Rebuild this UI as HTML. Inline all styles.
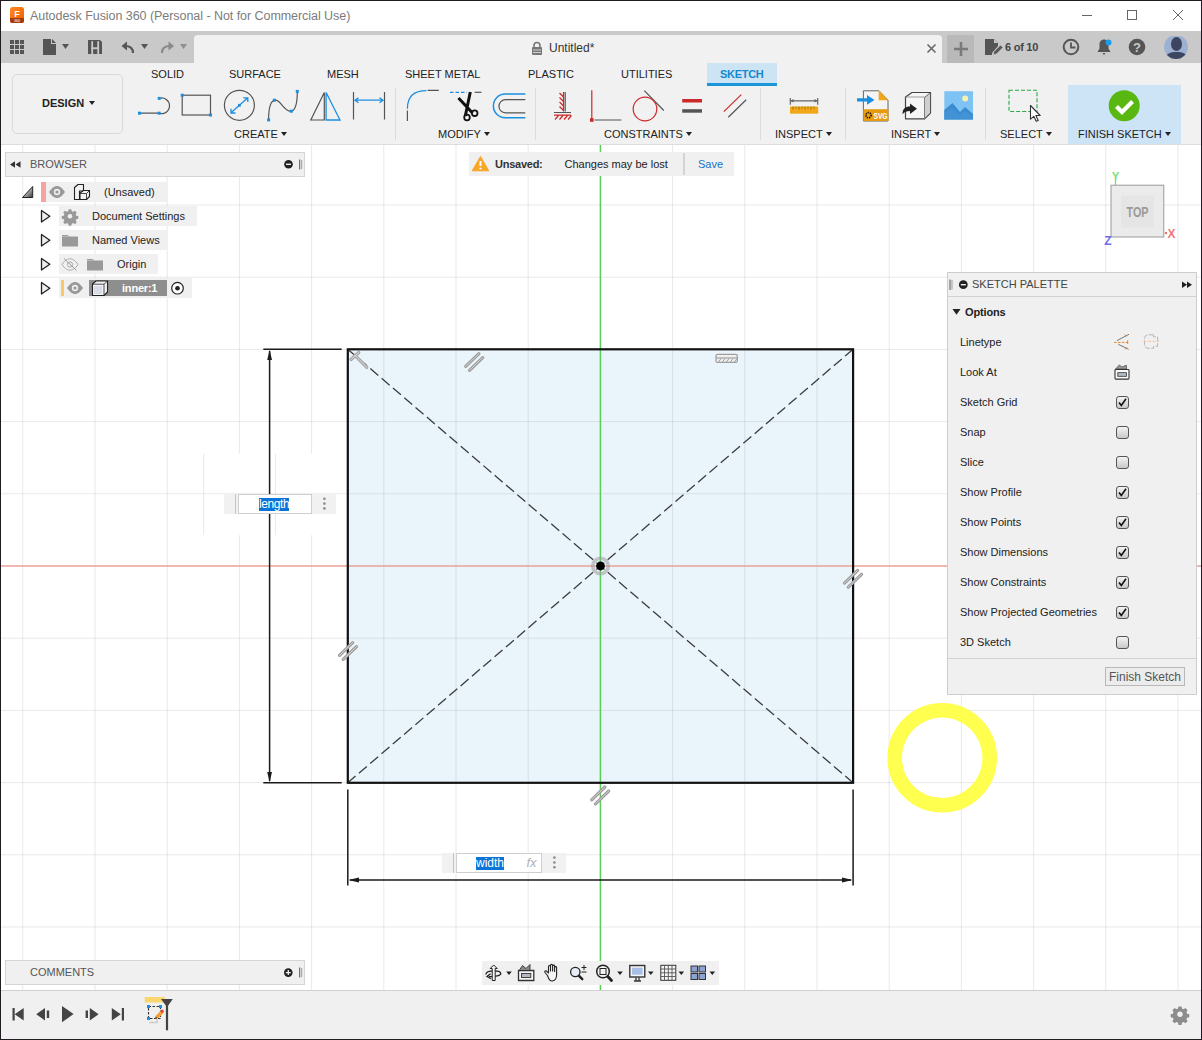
<!DOCTYPE html>
<html><head><meta charset="utf-8"><title>Autodesk Fusion 360</title>
<style>
*{box-sizing:border-box;margin:0;padding:0}
html,body{width:1202px;height:1040px;overflow:hidden;background:#fff}
body{font-family:"Liberation Sans",sans-serif;font-size:11px;color:#333;position:relative}
.abs{position:absolute}
.t{position:absolute;white-space:nowrap;line-height:14px}
#frame{position:absolute;left:0;top:0;width:1202px;height:1040px;border:1px solid #221a22;pointer-events:none;z-index:50}
#title{left:1px;top:1px;width:1200px;height:30px;background:#fff}
#qat{left:1px;top:31px;width:1200px;height:32px;background:#c9c9c9}
#tabarea{left:194px;top:35px;width:748px;height:28px;background:#f1f1f1;border-radius:4px 4px 0 0}
#ribbon{left:1px;top:63px;width:1200px;height:82px;background:#f1f1f1;border-bottom:1px solid #ddd}
#canvas{left:1px;top:145px;width:1200px;height:845px;background:#fff}
#timeline{left:1px;top:990px;width:1200px;height:49px;background:#f0f0f0;border-top:1px solid #d0d0d0}
.rt{position:absolute;top:67px;line-height:14px;font-size:11px;color:#222;white-space:nowrap}
.rl{position:absolute;top:127px;line-height:14px;font-size:11px;color:#222;white-space:nowrap}
.arr{display:inline-block;width:0;height:0;border-left:3px solid transparent;border-right:3px solid transparent;border-top:4px solid #222;vertical-align:middle;margin-left:3px;position:relative;top:-1px}
.sep{position:absolute;top:88px;width:1px;height:52px;background:#dcdcdc}
.panelhdr{position:absolute;background:#f0f0f0;border:1px solid #d4d4d4}
.tree{position:absolute;background:#f0f0f0;height:20px}
.pl{position:absolute;left:960px;line-height:14px;font-size:11px;color:#222;white-space:nowrap}
.cb{position:absolute;left:1116px;width:12.500px;height:12.500px;border:1px solid #555;border-radius:3px;background:linear-gradient(#f4f4f4,#c8c8c8)}
</style></head><body>
<div id="title" class="abs"></div>
<div id="qat" class="abs"></div>
<div id="tabarea" class="abs"></div>
<div id="ribbon" class="abs"></div>
<div id="canvas" class="abs"></div>
<div id="timeline" class="abs"></div>
<!-- title bar -->
<svg class="abs" style="left:9px;top:6px" width="16" height="18" viewBox="0 0 16 18">
<defs><linearGradient id="fg" x1="0" y1="0" x2="1" y2="1"><stop offset="0" stop-color="#ff8a1f"/><stop offset="1" stop-color="#f05a00"/></linearGradient></defs>
<rect x="1" y="1" width="14" height="16" rx="2.5" fill="url(#fg)"/>
<path d="M1 12h14v2.5a2.500 2.500 0 0 1-2.500 2.500h-9a2.500 2.500 0 0 1-2.500-2.500z" fill="#a83a08"/>
<text x="8" y="10.500" font-size="9" font-weight="700" fill="#fff" text-anchor="middle" font-family="Liberation Sans, sans-serif">F</text>
<text x="8" y="16" font-size="3.500" font-weight="700" fill="#f6d9c8" text-anchor="middle" font-family="Liberation Sans, sans-serif">360</text>
</svg>
<div class="t" style="left:30px;top:8px;font-size:12.500px;line-height:16px;color:#7c7c7c;letter-spacing:-0.050px">Autodesk Fusion 360 (Personal - Not for Commercial Use)</div>
<svg class="abs" style="left:1075px;top:5px" width="120" height="22" viewBox="0 0 120 22" fill="none" stroke="#666" stroke-width="1">
<path d="M7 10.500h10"/><rect x="52.500" y="5.500" width="9" height="9"/><path d="M98 5l10 10M108 5l-10 10"/>
</svg>
<!-- quick access -->
<svg class="abs" style="left:1px;top:31px" width="200" height="32" viewBox="1 31 200 32">
<g fill="#555">
<rect x="10" y="40" width="4" height="4"/><rect x="15" y="40" width="4" height="4"/><rect x="20" y="40" width="4" height="4"/>
<rect x="10" y="45" width="4" height="4"/><rect x="15" y="45" width="4" height="4"/><rect x="20" y="45" width="4" height="4"/>
<rect x="10" y="50" width="4" height="4"/><rect x="15" y="50" width="4" height="4"/><rect x="20" y="50" width="4" height="4"/>
<path d="M43 39h8v5h5v11h-13z"/><path d="M52 39l4 4h-4z"/>
<path d="M62 44h7l-3.500 5z"/>
<path d="M88 40h12l2 2v12h-14z"/>
<path d="M141 44h7l-3.500 5z"/>
</g>
<g fill="#c9c9c9"><rect x="91.300" y="41.200" width="1.800" height="12.800"/><rect x="97.300" y="41.200" width="1.800" height="12.800"/><rect x="91.300" y="47.300" width="7.800" height="1.900"/></g>
<path d="M133 53c0-4.500-2.500-7-8-7" fill="none" stroke="#555" stroke-width="2.200"/><path d="M121.500 46l5.500-4.500v9z" fill="#555"/>
<path d="M162 53c0-4.500 2.500-7 8-7" fill="none" stroke="#8a8a8a" stroke-width="2.200"/><path d="M174 46l-5.500-4.500v9z" fill="#8a8a8a"/>
<path d="M180 44h7l-3.500 5z" fill="#8f8f8f"/>
</svg>
<!-- doc tab -->
<svg class="abs" style="left:530px;top:41px" width="14" height="16" viewBox="0 0 14 16"><rect x="2" y="6" width="10" height="8" rx="1" fill="#777"/><path d="M4 6.500v-2a3 3 0 0 1 6 0v2" fill="none" stroke="#777" stroke-width="1.600"/><path d="M3 9h8M3 11.500h8" stroke="#e8e8e8" stroke-width="0.800"/></svg>
<div class="t" style="left:549px;top:41px;font-size:12px;line-height:15px;color:#333">Untitled*</div>
<svg class="abs" style="left:926px;top:43px" width="11" height="11" viewBox="0 0 11 11"><path d="M1.500 1.500l8 8M9.500 1.500l-8 8" stroke="#666" stroke-width="1.600"/></svg>
<div class="abs" style="left:947px;top:35px;width:27px;height:28px;background:#b9b9b9"></div>
<svg class="abs" style="left:953px;top:41px" width="16" height="16" viewBox="0 0 16 16"><path d="M8 1v14M1 8h14" stroke="#7a7a7a" stroke-width="2.600"/></svg>
<svg class="abs" style="left:984px;top:38px" width="20" height="19" viewBox="0 0 20 19"><path d="M1 1h9l4 4v3l-6 7v2h-7z" fill="#555"/><path d="M10 1v4h4" fill="#c9c9c9"/><path d="M9 17l1-3.500 6.500-6.500 2.500 2.500-6.500 6.500z" fill="#555" stroke="#c9c9c9" stroke-width="0.800"/></svg>
<div class="t" style="left:1005px;top:40px;font-size:11px;font-weight:700;line-height:14px;color:#444;letter-spacing:-0.250px">6 of 10</div>
<svg class="abs" style="left:1060px;top:36px" width="140" height="24" viewBox="1060 36 140 24">
<circle cx="1071" cy="47" r="7.300" fill="none" stroke="#555" stroke-width="2"/><path d="M1071 42.500v5h4.500" fill="none" stroke="#555" stroke-width="1.800"/>
<path d="M1104 39.500c-3 0-4.500 2.300-4.500 5v4l-2 3.500h13l-2-3.500v-4c0-2.700-1.500-5-4.500-5z" fill="#555"/><path d="M1102.500 53h3l-1.500 2z" fill="#555"/><circle cx="1108.500" cy="42.500" r="3" fill="#1c9be6"/>
<circle cx="1137" cy="47" r="8.300" fill="#555"/>
<text x="1137" y="51.500" font-size="13" font-weight="700" fill="#c9c9c9" text-anchor="middle" font-family="Liberation Sans, sans-serif">?</text>
<circle cx="1176" cy="47" r="12" fill="#9db1d2"/>
<clipPath id="avc"><circle cx="1176" cy="47" r="12"/></clipPath>
<g clip-path="url(#avc)" fill="#3c4660"><ellipse cx="1176.500" cy="44" rx="5.500" ry="7"/><path d="M1165 60c0-6 5-8 11.500-8s11.500 2 11.500 8z"/></g>
</svg>
<!-- ribbon -->
<div class="abs" style="left:707px;top:63px;width:70px;height:23px;background:#cde4f4;border-bottom:3px solid #1b94d8"></div>
<div class="abs" style="left:1068px;top:85px;width:113px;height:59px;background:#cce4f6"></div>
<div class="abs" style="left:12px;top:74px;width:111px;height:60px;border:1px solid #d9d9d9;border-radius:5px"></div>
<div class="t" style="left:42px;top:96px;font-weight:700;color:#222">DESIGN<span class="arr" style="margin-left:5px"></span></div>
<div class="rt" style="left:151px">SOLID</div>
<div class="rt" style="left:229px">SURFACE</div>
<div class="rt" style="left:327px">MESH</div>
<div class="rt" style="left:405px">SHEET METAL</div>
<div class="rt" style="left:528px">PLASTIC</div>
<div class="rt" style="left:621px">UTILITIES</div>
<div class="rt" style="left:720px;color:#1589d0;font-weight:700;letter-spacing:-0.300px">SKETCH</div>
<div class="rl" style="left:234px">CREATE<span class="arr"></span></div>
<div class="rl" style="left:438px">MODIFY<span class="arr"></span></div>
<div class="rl" style="left:604px">CONSTRAINTS<span class="arr"></span></div>
<div class="rl" style="left:775px">INSPECT<span class="arr"></span></div>
<div class="rl" style="left:891px">INSERT<span class="arr"></span></div>
<div class="rl" style="left:1000px">SELECT<span class="arr"></span></div>
<div class="rl" style="left:1078px">FINISH SKETCH<span class="arr"></span></div>
<div class="sep" style="left:395px"></div><div class="sep" style="left:535px"></div><div class="sep" style="left:760px"></div><div class="sep" style="left:845px"></div><div class="sep" style="left:985px"></div>
<svg class="abs" style="left:130px;top:84px" width="1060" height="42" viewBox="130 84 1060 42" fill="none" stroke-linecap="butt">
<g stroke="#555" stroke-width="1.200">
<!-- line -->
<path d="M139.500 113.200H159.200A7.810 7.810 0 1 0 159.200 98.400"/>
<!-- rect -->
<rect x="182.200" y="95.200" width="28.300" height="19.800"/>
<!-- circle -->
<circle cx="239.400" cy="105.300" r="15"/>
<!-- spline -->
<path d="M268.600 119.900C268.600 108 270.500 100.800 275 100.200C281 99.500 284 112.500 291.300 111.200C296 110 297.300 100 297.300 91.400"/>
<!-- mirror -->
<path d="M310.800 120H324.300V92.500Z"/>
<!-- dim -->
<path d="M353.500 92V119.500M384.500 92V119.500"/>
<!-- fillet -->
<path d="M407.400 110.500V121M427.600 90.300H438.800"/>
<!-- trim -->
<path d="M474.700 92.300H481.500"/>
<!-- offset inner -->
<path d="M525.300 99.700H505.500A6.550 6.550 0 0 0 505.500 112.800H525.300"/>
<!-- constraints -->
<path d="M565.200 92.100V111.400M554 112.500H571M594.500 120H621.400M644.300 90.700L663.800 110.500M728.300 117.200L746.200 99.700"/>
<path d="M790.300 100.800H817.700M790.300 98V104.700M817.700 98V104.700" stroke="#666"/>
</g>
<g stroke="#1c8ee0" stroke-width="1.300">
<path d="M231.500 112.300L247.300 98.300M231 108.800V113H235.500M243.300 97.800H247.800V102"/>
<path d="M326.100 92.500V120H340Z"/>
<path d="M355 100.200H383M358.500 97.700L355 100.200L358.500 102.700M379.500 97.700L383 100.200L379.500 102.700"/>
<path d="M407.400 108.700C407.400 97 414 90.700 426.400 90.700"/>
<path d="M450 92.300H467" stroke-dasharray="3.500 2"/>
<path d="M525.300 94.100H505.200A11.800 11.800 0 0 0 505.200 117.700H525.300" stroke-width="1.500"/>
</g>
<g fill="#1c8ee0">
<rect x="138" y="111.700" width="3" height="3"/><rect x="157.700" y="111.700" width="3" height="3"/><rect x="157.700" y="96.900" width="3" height="3"/>
<rect x="180.700" y="93.700" width="3" height="3"/><rect x="209" y="113.500" width="3" height="3"/>
<rect x="238" y="103.900" width="2.800" height="2.800"/>
<rect x="267.100" y="118.400" width="3" height="3"/><rect x="272.900" y="98.700" width="3" height="3"/><rect x="289.800" y="109.700" width="3" height="3"/><rect x="295.800" y="89.900" width="3" height="3"/>
</g>
<!-- scissors -->
<g stroke="#111" fill="none">
<path d="M458.500 98L472.500 113M470.300 92L465.300 116" stroke-width="3"/>
<circle cx="467" cy="117.500" r="2.800" stroke-width="1.800"/><circle cx="474.700" cy="113.200" r="2.800" stroke-width="1.800"/>
</g>
<!-- red constraints -->
<g stroke="#cc2a2a" stroke-width="1.200">
<path d="M563.500 92.100V111.400M563.500 97L559.500 93M563.500 101.500L559.500 97.500M563.500 106L559.500 102M563.500 110.500L559.500 106.500"/>
<path d="M554 115.200H571M558.500 115.500L555 119.500M563 115.500L559.500 119.500M567.500 115.500L564 119.500M571.500 115.500L568 119.500"/>
<path d="M591.800 90.300V120"/>
<circle cx="645" cy="109" r="11.800"/>
<path d="M723.800 111.600L741.300 94.600"/>
</g>
<rect x="590" y="118.200" width="3.600" height="3.600" fill="#cc2a2a"/>
<rect x="682.200" y="99" width="19.800" height="3.500" fill="#cc2a2a"/>
<rect x="682.200" y="109.200" width="19.800" height="3.500" fill="#555"/>
<!-- ruler -->
<path d="M793.500 99L790.300 100.800L793.500 102.600ZM814.500 99L817.700 100.800L814.500 102.600Z" fill="#666"/>
<rect x="790" y="106.500" width="28.200" height="7.200" fill="#f0a81a"/>
<path d="M793 106.500v3M796 106.500v2M799 106.500v3M802 106.500v2M805 106.500v3M808 106.500v2M811 106.500v3M814 106.500v2" stroke="#8a5a00" stroke-width="0.800"/>
<!-- insert svg -->
<path d="M863.400 100V90.800H879L888 100V121H863.400Z" fill="#f4f4f4" stroke="#666" stroke-width="1"/>
<path d="M878.700 90.300L888.400 100.200H878.700Z" fill="#f0a81a"/>
<rect x="863.400" y="109.200" width="25" height="11.800" fill="#e79c10"/>
<circle cx="868.500" cy="115.200" r="2.600" fill="none" stroke="#111" stroke-width="1.500" stroke-dasharray="1.300 0.900"/>
<text x="880.500" y="119" font-size="8.500" font-weight="700" fill="#fff" text-anchor="middle" font-family="Liberation Sans, sans-serif" textLength="14" lengthAdjust="spacingAndGlyphs">SVG</text>
<path d="M857 98.200H867V95L874.500 99.900L867 104.800V101.600H857Z" fill="#1c8ee0"/>
<!-- derive -->
<path d="M905.500 97L912 92.500H930.500V113L924.500 118.800H905.500Z" fill="#f6f6f6" stroke="#444" stroke-width="1.200" stroke-linejoin="round"/>
<path d="M924.500 97.500L930.500 92.500V113L924.500 118.800Z" fill="#cfcfcf" stroke="#444" stroke-width="0.800"/>
<path d="M905.500 97H924.500V118.800" stroke="#888" stroke-width="0.800"/>
<path d="M902.500 114.300C902.500 109 905 106.500 910 106.500V103.500L917 108.800L910 114V111C906.500 111 904.500 112 902.500 114.300Z" fill="#222"/>
<!-- image -->
<rect x="944.300" y="91.200" width="28.700" height="28.300" fill="#7ec3f3"/>
<path d="M944.300 119.500V110L952.500 103L960 112L965 107L973 114V119.500Z" fill="#3a8bd0"/>
<path d="M944.300 119.500V113L952 108L959 115L965 111L973 117V119.500Z" fill="#4a98d8" opacity="0.600"/>
<circle cx="965.200" cy="98.600" r="3" fill="#f6f1b0"/>
<!-- select -->
<rect x="1009" y="90.300" width="28" height="21.200" stroke="#28a848" stroke-width="1.100" stroke-dasharray="4 2"/>
<path d="M1030.500 105.500V119.200L1033.800 116.300L1036.200 121.300L1038.200 120.400L1035.900 115.500H1040.200Z" fill="#fff" stroke="#333" stroke-width="1.100" stroke-linejoin="round"/>
<!-- finish -->
<circle cx="1124.200" cy="105.800" r="15.500" fill="#58b711"/>
<path d="M1116.500 106.500L1122 112L1132.500 101.500" stroke="#fff" stroke-width="4.200" fill="none"/>
</svg>
<!--CANVAS-START--><svg class="abs" style="left:1px;top:145px" width="1200" height="845" viewBox="1 145 1200 845" fill="none">
<rect x="347.700" y="349.200" width="505.400" height="433.600" fill="#eaf5fb"/>
<path d="M22.8 145V990M95.0 145V990M167.2 145V990M239.4 145V990M311.6 145V990M383.8 145V990M456.0 145V990M528.2 145V990M672.6 145V990M744.8 145V990M817.0 145V990M889.2 145V990M961.4 145V990M1033.6 145V990M1105.8 145V990M1178.0 145V990M1 205.0H1201M1 277.2H1201M1 349.4H1201M1 421.6H1201M1 493.8H1201M1 638.2H1201M1 710.4H1201M1 782.6H1201M1 854.8H1201M1 927.0H1201" stroke="#000" stroke-opacity="0.090" stroke-width="1"/>
<path d="M1 566H1201" stroke="#eaa096" stroke-width="1.500"/>
<path d="M600.400 145V990" stroke="#58d058" stroke-width="1.500"/>
<rect x="202" y="453.700" width="144" height="81.500" fill="#fff"/>
<path d="M203.700 453.700V535.200M275.400 453.700V535.200M202 493.800H346" stroke="#000" stroke-opacity="0.090" stroke-width="1"/>
<path d="M347.700 349.200L853.100 782.800M853.100 349.200L347.700 782.800" stroke="#3c3c3c" stroke-width="1.300" stroke-dasharray="10.500 4.400"/>
<rect x="347.800" y="349.300" width="505.300" height="433.500" stroke="#111" stroke-width="2.200"/>
<circle cx="600.500" cy="566" r="7.800" stroke="#9a9a9a" stroke-opacity="0.550" stroke-width="3.600"/>
<circle cx="600.500" cy="566" r="4.400" fill="#000"/>
<path d="M465.7 366.4L478.9 353.7M469.5 370.3L482.7 357.6" stroke="#9c9c9c" stroke-width="3.200" stroke-linecap="round"/><path d="M465.7 366.4L478.9 353.7M469.5 370.3L482.7 357.6" stroke="#dcdcdc" stroke-width="0.900" stroke-linecap="round"/>
<path d="M844.5 583.1L857.7 570.4M848.3 587.1L861.5 574.3" stroke="#9c9c9c" stroke-width="3.200" stroke-linecap="round"/><path d="M844.5 583.1L857.7 570.4M848.3 587.1L861.5 574.3" stroke="#dcdcdc" stroke-width="0.900" stroke-linecap="round"/>
<path d="M339.5 655.4L352.7 642.6M343.3 659.4L356.5 646.6" stroke="#9c9c9c" stroke-width="3.200" stroke-linecap="round"/><path d="M339.5 655.4L352.7 642.6M343.3 659.4L356.5 646.6" stroke="#dcdcdc" stroke-width="0.900" stroke-linecap="round"/>
<path d="M591.7 799.8L604.9 787.0M595.5 803.8L608.7 791.0" stroke="#9c9c9c" stroke-width="3.200" stroke-linecap="round"/><path d="M591.7 799.8L604.9 787.0M595.5 803.8L608.7 791.0" stroke="#dcdcdc" stroke-width="0.900" stroke-linecap="round"/>
<path d="M351 359.500L358.800 352.500M355 355.300L366.800 367.400" stroke="#a4a4a4" stroke-width="3.200" stroke-linecap="round"/><path d="M351 359.500L358.800 352.500M355 355.300L366.800 367.400" stroke="#e4e4e4" stroke-width="1" stroke-linecap="round"/>
<rect x="716" y="354.400" width="21.300" height="8" rx="1.500" stroke="#a0a0a0" stroke-width="1.300" fill="#f0f0f0"/>
<path d="M716 358H737.300" stroke="#a0a0a0" stroke-width="1.200"/>
<path d="M718.500 362l2.500-3.500M722.500 362l2.500-3.500M726.500 362l2.500-3.500M730.500 362l2.500-3.500M734.500 362l2.500-3.500" stroke="#a0a0a0" stroke-width="1"/>
<g stroke="#1a1a1a" stroke-width="1.500">
<path d="M263.300 349.200H341.700M263.300 782.800H341.700M269.600 351V494M269.600 514V781"/>
<path d="M347.800 789.500V885.500M853.100 789.500V885.500M350 880H851"/>
</g>
<g fill="#1a1a1a">
<path d="M269.600 349.800L267.200 360H272Z"/><path d="M269.600 782.200L267.200 772H272Z"/>
<path d="M348.400 880L359 877.600V882.400Z"/><path d="M852.500 880L842 877.600V882.400Z"/>
</g>
<circle cx="942.200" cy="757.800" r="47.500" stroke="#ffff40" stroke-opacity="0.920" stroke-width="14.600"/>
</svg>
<!--CANVAS-END-->
<!-- browser header -->
<div class="panelhdr" style="left:5px;top:152px;width:300px;height:25px"></div>
<svg class="abs" style="left:9px;top:160px" width="14" height="9" viewBox="0 0 14 9"><path d="M1 4.500L6 1.200V7.800ZM6.500 4.500L11.500 1.200V7.800Z" fill="#333"/></svg>
<div class="t" style="left:30px;top:157px;color:#555">BROWSER</div>
<svg class="abs" style="left:283px;top:158px" width="22" height="13" viewBox="0 0 22 13"><circle cx="5.500" cy="6.300" r="4.300" fill="#222"/><path d="M3 6.300H8" stroke="#f0f0f0" stroke-width="1.400"/><path d="M16.700 1.500V11.500" stroke="#555" stroke-width="1"/><path d="M18.700 2V11" stroke="#999" stroke-width="1"/></svg>
<!-- tree rows -->
<div class="tree" style="left:41px;top:182px;width:126px"></div>
<div class="tree" style="left:59px;top:206px;width:138px"></div>
<div class="tree" style="left:59px;top:230px;width:109px"></div>
<div class="tree" style="left:59px;top:254px;width:99px"></div>
<div class="tree" style="left:59px;top:278px;width:133px"></div>
<div class="abs" style="left:41px;top:182px;width:5px;height:20px;background:#f4a3a3"></div>
<div class="abs" style="left:61px;top:280px;width:3px;height:16px;background:#f9c963"></div>
<div class="abs" style="left:89px;top:280px;width:78px;height:16px;background:#8e8e8e"></div>
<div class="t" style="left:104px;top:185px;color:#222">(Unsaved)</div>
<div class="t" style="left:92px;top:209px;color:#222">Document Settings</div>
<div class="t" style="left:92px;top:233px;color:#222">Named Views</div>
<div class="t" style="left:117px;top:257px;color:#222">Origin</div>
<div class="t" style="left:122px;top:281px;color:#fff;font-weight:700;letter-spacing:-0.200px">inner:1</div>
<svg class="abs" style="left:15px;top:180px" width="185" height="122" viewBox="15 180 185 122">
<defs><linearGradient id="tg" x1="0" y1="0" x2="1" y2="1"><stop offset="0.300" stop-color="#ddd"/><stop offset="1" stop-color="#333"/></linearGradient></defs>
<path d="M22.500 197.500H32.700V186.500Z" fill="url(#tg)" stroke="#222" stroke-width="1"/>
<g fill="#eee" stroke="#222" stroke-width="1.300" stroke-linejoin="round">
<path d="M41.500 210.500V222L49.800 216.200Z"/><path d="M41.500 234.500V246L49.800 240.200Z"/><path d="M41.500 258.500V270L49.800 264.200Z"/><path d="M41.500 282.500V294L49.800 288.200Z"/>
</g>
<!-- eyes -->
<g><path d="M49 192C52 187.500 55 186 57 186S62 187.500 65 192C62 196.500 59 198 57 198S52 196.500 49 192Z" fill="#999"/><circle cx="57" cy="192" r="3.200" fill="#eee"/><circle cx="57" cy="192" r="1.600" fill="#999"/></g>
<g transform="translate(18 96)"><path d="M49 192C52 187.500 55 186 57 186S62 187.500 65 192C62 196.500 59 198 57 198S52 196.500 49 192Z" fill="#999"/><circle cx="57" cy="192" r="3.200" fill="#eee"/><circle cx="57" cy="192" r="1.600" fill="#999"/></g>
<!-- component icon -->
<g fill="#f2f2f2" stroke="#222" stroke-width="1.100" stroke-linejoin="round">
<path d="M74.500 187.500L78 184.500H83.500V191H79.500V199.500H74.500Z"/>
<path d="M80 193L83.500 190.500H89.500V196.500L86.500 199.500H80Z"/>
</g>
<path d="M86.500 193.500V199.500M80 193.500H86.500L89.500 190.500" stroke="#222" stroke-width="0.800" fill="none"/>
<!-- gear -->
<g transform="translate(70 216.200) scale(0.880)"><path d="M-1.500-8h3l.5 2.300 1.600.700 2-1.300 2.100 2.100-1.300 2 .700 1.600 2.300.500v3l-2.300.500-.700 1.600 1.300 2-2.100 2.100-2-1.300-1.600.700-.5 2.300h-3l-.5-2.300-1.600-.700-2 1.300-2.100-2.100 1.300-2-.700-1.600-2.300-.5v-3l2.300-.5.700-1.600-1.300-2 2.100-2.100 2 1.300 1.600-.700z" fill="#999"/><circle r="2.600" fill="#f0f0f0"/></g>
<!-- folders -->
<path d="M62 235H67.500L69 236.500H78V246.500H62Z" fill="#999"/><path d="M62 236.500H68" stroke="#c4c4c4" stroke-width="0.800"/>
<path d="M87 259H92.500L94 260.500H103V270.500H87Z" fill="#999"/><path d="M87 260.500H93" stroke="#c4c4c4" stroke-width="0.800"/>
<!-- hidden eye -->
<path d="M62 264.500C65 260 68 258.800 70 258.800S75 260 78 264.500C75 269 72 270.200 70 270.200S65 269 62 264.500Z" fill="none" stroke="#aaa" stroke-width="1"/><circle cx="70" cy="264.500" r="2.600" fill="none" stroke="#aaa" stroke-width="1"/><path d="M64 258.500L76.500 270.500" stroke="#999" stroke-width="1"/>
<!-- cube -->
<path d="M92.500 284L96 281H107.500V292L104 295.500H92.500Z" fill="#f4f4f4" stroke="#222" stroke-width="1.100" stroke-linejoin="round"/>
<path d="M104 284.200V295.500M92.500 284.200H104L107.500 281" stroke="#222" stroke-width="0.800" fill="none"/>
<rect x="94" y="286" width="8" height="8" fill="#d8dde8"/>
<!-- radio -->
<circle cx="177.500" cy="288.200" r="5.800" fill="#fff" stroke="#222" stroke-width="1.200"/><circle cx="177.500" cy="288.200" r="2.300" fill="#222"/>
</svg>
<!-- unsaved bar -->
<div class="abs" style="left:469px;top:152px;width:265px;height:24px;background:#f0f0f0"></div>
<svg class="abs" style="left:471px;top:155px" width="19" height="17" viewBox="0 0 19 17"><path d="M9.500 1.500L17.800 15.800H1.200Z" fill="#f7a626" stroke="#f7a626" stroke-width="1" stroke-linejoin="round"/><path d="M9.500 6V11" stroke="#fff" stroke-width="2"/><circle cx="9.500" cy="13.500" r="1.100" fill="#fff"/></svg>
<div class="t" style="left:495px;top:157px;font-weight:700;color:#333;letter-spacing:-0.250px">Unsaved:</div>
<div class="t" style="left:564.500px;top:157px;color:#222">Changes may be lost</div>
<div class="abs" style="left:683px;top:153px;width:2px;height:22px;background:#d4d4d4"></div>
<div class="t" style="left:698px;top:157px;color:#1a73c8">Save</div>
<!-- view cube -->
<svg class="abs" style="left:1095px;top:165px" width="95" height="90" viewBox="1095 165 95 90">
<rect x="1111" y="185.200" width="52.800" height="51.800" fill="#ebebeb" stroke="#9a9a9a" stroke-width="1"/>
<rect x="1121" y="195.500" width="33" height="32" fill="#e2e2e2" opacity="0.700"/>
<path d="M1115.500 180V185" stroke="#6fdc6f" stroke-width="1.300"/>
<circle cx="1166" cy="233" r="1.200" fill="#ee6a6a"/>
<text x="1137.500" y="216.500" font-size="14" font-weight="700" fill="#9a9a9a" text-anchor="middle" font-family="Liberation Sans, sans-serif" textLength="22" lengthAdjust="spacingAndGlyphs">TOP</text>
<text x="1115.500" y="179.500" font-size="11.500" font-weight="700" fill="#7ae07a" text-anchor="middle" font-family="Liberation Sans, sans-serif">Y</text>
<text x="1171.500" y="237.500" font-size="12" font-weight="700" fill="#f07878" text-anchor="middle" font-family="Liberation Sans, sans-serif">X</text>
<text x="1108" y="245" font-size="12" font-weight="700" fill="#6c6cf0" text-anchor="middle" font-family="Liberation Sans, sans-serif">Z</text>
</svg>
<!-- sketch palette -->
<div class="abs" style="left:947px;top:272px;width:250px;height:423px;background:#f0f0f0;border:1px solid #cdcdcd"></div>
<div class="abs" style="left:948px;top:296px;width:248px;height:1px;background:#d2d2d2"></div>
<div class="abs" style="left:948px;top:658px;width:248px;height:1px;background:#d2d2d2"></div>
<svg class="abs" style="left:948px;top:277px" width="248px" height="16" viewBox="948 277 248 16"><path d="M950 279.500V290" stroke="#555" stroke-width="1"/><path d="M952 280V289.500" stroke="#999" stroke-width="1"/><circle cx="963.300" cy="284.700" r="4.400" fill="#222"/><path d="M960.800 284.700H965.800" stroke="#f0f0f0" stroke-width="1.400"/><path d="M1182 281.500L1187 284.800L1182 288ZM1187 281.500L1192 284.800L1187 288Z" fill="#222"/></svg>
<div class="t" style="left:972px;top:276.500px;color:#444">SKETCH PALETTE</div>
<svg class="abs" style="left:952px;top:308px" width="10" height="8" viewBox="0 0 10 8"><path d="M0.500 1H8.500L4.500 6.800Z" fill="#222"/></svg>
<div class="t" style="left:965px;top:305px;font-weight:700;color:#222;letter-spacing:-0.150px">Options</div>
<div class="pl" style="top:334.8px">Linetype</div>
<div class="pl" style="top:364.9px">Look At</div>
<div class="pl" style="top:394.7px">Sketch Grid</div>
<div class="cb" style="top:396px"><svg width="11" height="11" viewBox="0 0 11 11" style="position:absolute;left:0;top:0"><path d="M2 5.500L4.300 8.500L9 1.800" fill="none" stroke="#111" stroke-width="1.600"/></svg></div>
<div class="pl" style="top:424.8px">Snap</div>
<div class="cb" style="top:426px"></div>
<div class="pl" style="top:454.7px">Slice</div>
<div class="cb" style="top:456px"></div>
<div class="pl" style="top:484.5px">Show Profile</div>
<div class="cb" style="top:486px"><svg width="11" height="11" viewBox="0 0 11 11" style="position:absolute;left:0;top:0"><path d="M2 5.500L4.300 8.500L9 1.800" fill="none" stroke="#111" stroke-width="1.600"/></svg></div>
<div class="pl" style="top:514.8px">Show Points</div>
<div class="cb" style="top:516px"><svg width="11" height="11" viewBox="0 0 11 11" style="position:absolute;left:0;top:0"><path d="M2 5.500L4.300 8.500L9 1.800" fill="none" stroke="#111" stroke-width="1.600"/></svg></div>
<div class="pl" style="top:544.8px">Show Dimensions</div>
<div class="cb" style="top:546px"><svg width="11" height="11" viewBox="0 0 11 11" style="position:absolute;left:0;top:0"><path d="M2 5.500L4.300 8.500L9 1.800" fill="none" stroke="#111" stroke-width="1.600"/></svg></div>
<div class="pl" style="top:574.7px">Show Constraints</div>
<div class="cb" style="top:576px"><svg width="11" height="11" viewBox="0 0 11 11" style="position:absolute;left:0;top:0"><path d="M2 5.500L4.300 8.500L9 1.800" fill="none" stroke="#111" stroke-width="1.600"/></svg></div>
<div class="pl" style="top:604.7px">Show Projected Geometries</div>
<div class="cb" style="top:606px"><svg width="11" height="11" viewBox="0 0 11 11" style="position:absolute;left:0;top:0"><path d="M2 5.500L4.300 8.500L9 1.800" fill="none" stroke="#111" stroke-width="1.600"/></svg></div>
<div class="pl" style="top:634.7px">3D Sketch</div>
<div class="cb" style="top:636px"></div>
<svg class="abs" style="left:1110px;top:330px" width="54" height="54" viewBox="1110 330 54 54" fill="none">
<path d="M1117 340.600L1129 334.300M1118.300 344.300L1128.600 349.300" stroke="#666" stroke-width="0.900"/>
<path d="M1114 342.400H1129.500" stroke="#ee7a1a" stroke-width="0.900" stroke-dasharray="2.600 1.300"/>
<path d="M1127.600 340.300V344M1124.600 334.300L1126.600 336.300M1126.800 347.300L1125 349.600" stroke="#ee7a1a" stroke-width="0.800"/>
<path d="M1153.600 334.800H1148A3.500 3.500 0 0 0 1144.500 338.300V344.800A3.500 3.500 0 0 0 1148 348.300H1153.600V346.300H1157.600V336.800H1153.600Z" stroke="#bdb4b4" stroke-width="1" stroke-dasharray="5 1.500"/>
<path d="M1143.300 341.300H1159" stroke="#f3c4a4" stroke-width="1" stroke-dasharray="3 1.600"/>
<path d="M1115.600 369L1119.300 365L1122 367L1126.300 365.200L1126.600 369Z" fill="#999" stroke="#444" stroke-width="0.700" stroke-linejoin="round"/>
<rect x="1115" y="369.500" width="14" height="9.600" rx="0.800" stroke="#333" stroke-width="1.100" fill="#fafafa"/>
<rect x="1117.800" y="372.700" width="8.600" height="3.600" fill="#b4bacb" stroke="#333" stroke-width="0.800"/>
</svg>
<div class="abs" style="left:1105px;top:667px;width:80px;height:19px;border:1px solid #b8b8b8;background:#ececec"></div>
<div class="t" style="left:1109px;top:669.500px;font-size:12px;color:#555">Finish Sketch</div>
<!-- dimension inputs -->
<div class="abs" style="left:224px;top:494px;width:112px;height:20px;background:#f1f1f1"></div>
<div class="abs" style="left:234.500px;top:494px;width:1.500px;height:20px;background:#c4c4c4"></div>
<div class="abs" style="left:238px;top:494px;width:74px;height:20px;background:#fff;border:1px solid #cfcfcf"></div>
<div class="t" style="left:259px;top:498px;font-size:12px;line-height:13px;color:#fff;background:#0a74d8;letter-spacing:-0.400px">length</div>
<svg class="abs" style="left:321px;top:496px" width="7" height="16" viewBox="0 0 7 16" fill="#8a8a8a"><circle cx="3.400" cy="2.800" r="1.300"/><circle cx="3.400" cy="7.600" r="1.300"/><circle cx="3.400" cy="12.400" r="1.300"/></svg>
<div class="abs" style="left:442px;top:853px;width:124px;height:20px;background:#f1f1f1"></div>
<div class="abs" style="left:452.500px;top:853px;width:1.500px;height:20px;background:#c4c4c4"></div>
<div class="abs" style="left:456px;top:853px;width:86px;height:20px;background:#fff;border:1px solid #cfcfcf"></div>

<div class="abs" style="left:502.500px;top:857px;width:1px;height:13px;background:#111"></div>
<div class="t" style="left:476px;top:857px;font-size:12px;line-height:13px;color:#fff;background:#0a74d8">width</div>
<div class="t" style="left:526.500px;top:855px;font-size:13px;line-height:15px;color:#b0b0b0;font-style:italic">fx</div>
<svg class="abs" style="left:551px;top:855px" width="7" height="16" viewBox="0 0 7 16" fill="#8a8a8a"><circle cx="3.400" cy="2.600" r="1.300"/><circle cx="3.400" cy="7.500" r="1.300"/><circle cx="3.400" cy="12.300" r="1.300"/></svg>
<!-- comments -->
<div class="panelhdr" style="left:5px;top:960px;width:300px;height:25px"></div>
<div class="t" style="left:30px;top:965px;color:#555">COMMENTS</div>
<svg class="abs" style="left:283px;top:966px" width="22" height="13" viewBox="0 0 22 13"><circle cx="5.300" cy="6.600" r="4.300" fill="#222"/><path d="M2.800 6.600H7.800M5.300 4.100V9.100" stroke="#f0f0f0" stroke-width="1.300"/><path d="M16.700 1.500V11.500" stroke="#555" stroke-width="1"/><path d="M18.700 2V11" stroke="#999" stroke-width="1"/></svg>
<!-- nav bar -->
<div class="abs" style="left:482px;top:961px;width:237px;height:24px;background:#f0f0f0"></div>
<svg class="abs" style="left:482px;top:961px" width="237" height="24" viewBox="482 961 237 24" fill="none">
<g fill="#222"><path d="M506.200 971.500H511.800L509 975Z"/><path d="M617.200 971.500H622.800L620 975Z"/><path d="M648 971.500H653.600L650.800 975Z"/><path d="M678.500 971.500H684.100L681.300 975Z"/><path d="M709.500 971.500H715.100L712.300 975Z"/></g>
<!-- orbit -->
<path d="M485.800 974.500C486 971.800 490 970.800 494 970.800C498 970.800 500.800 971.800 500.800 973.500C500.800 975.600 495.500 976.800 489 976.600" stroke="#222" stroke-width="1.300"/><path d="M490.600 973.700L487 976.500L490.900 978.800" stroke="#222" stroke-width="1.300"/>
<path d="M492.200 980.500V968.500H490.200L493.700 965L497.200 968.500H495.200V980.500Z" fill="#f4f4f4" stroke="#222" stroke-width="1" stroke-linejoin="round"/>
<!-- look at -->
<path d="M518.500 970.500H533.800V980.500H518.500Z" stroke="#333" stroke-width="1.300" fill="#f6f6f6"/><rect x="521.500" y="973.500" width="9.300" height="4" fill="#b4b8c4" stroke="#333" stroke-width="0.900"/><path d="M519.500 970L522.500 965.500L526 968.500L530 964.500V970" fill="#888" stroke="#333" stroke-width="0.900" stroke-linejoin="round"/>
<!-- hand -->
<path d="M547.500 975.500L545 972.500C544.200 971.300 545.800 970.300 546.800 971.300L548.500 973V966.500C548.500 965.200 550.500 965.200 550.500 966.500V971V965.300C550.500 964 552.600 964 552.600 965.300V971V966C552.600 964.800 554.600 964.800 554.600 966V971.500V967.500C554.600 966.300 556.600 966.300 556.600 967.500V975C556.600 978 555 981 552 981S548.500 978 547.500 975.500Z" stroke="#222" stroke-width="1.100" fill="#f4f4f4" stroke-linejoin="round"/>
<!-- zoom -->
<circle cx="575.300" cy="972" r="4.700" stroke="#222" stroke-width="1.300" fill="#e8ecf4"/><path d="M579 975.800L582.300 979.200" stroke="#222" stroke-width="2.400" stroke-linecap="round"/><path d="M581.500 967.500H586.500M584 965V970M581.500 972H586.500" stroke="#222" stroke-width="1"/>
<!-- zoom window -->
<circle cx="603" cy="971.500" r="6.300" stroke="#222" stroke-width="1.500" fill="#f4f4f4"/><rect x="600" y="968.500" width="6" height="6" stroke="#222" stroke-width="1"/><path d="M607.800 976.500L611.500 980.500" stroke="#222" stroke-width="2.800" stroke-linecap="round"/>
<!-- display -->
<rect x="629.800" y="965.500" width="15" height="11.500" stroke="#333" stroke-width="1.400" fill="#f4f4f4"/><rect x="632" y="967.700" width="10.600" height="7" fill="#a8bfe8"/><path d="M634 981H641M636 977.500V981M639 977.500V981" stroke="#333" stroke-width="1.300"/>
<!-- grid -->
<rect x="660.800" y="965.300" width="15" height="15" fill="#f4f4f4" stroke="#333" stroke-width="1"/><path d="M664.500 965.300V980.300M668.300 965.300V980.300M672 965.300V980.300M660.800 969H675.800M660.800 972.800H675.800M660.800 976.500H675.800" stroke="#555" stroke-width="0.900"/>
<!-- viewports -->
<g fill="#8aa4d6" stroke="#333" stroke-width="1"><rect x="691" y="966" width="6.500" height="6"/><rect x="699" y="966" width="6.500" height="6"/><rect x="691" y="973.500" width="6.500" height="6"/><rect x="699" y="973.500" width="6.500" height="6"/></g>
</svg>
<!-- timeline -->
<svg class="abs" style="left:1px;top:991px" width="1200" height="47" viewBox="1 991 1200 47" fill="none">
<g fill="#444"><path d="M12.500 1008H14.700V1020.500H12.500ZM23.700 1008V1020.500L14.700 1014.200Z"/>
<path d="M36.200 1014.200L45 1008V1020.500ZM46.800 1010.500H49.200V1018H46.800Z"/>
<path d="M62 1006V1022.200L73.600 1014.100Z"/>
<path d="M98.600 1014.200L89.800 1008V1020.500ZM85.600 1010.500H88V1018H85.600Z"/>
<path d="M121.800 1008H124V1020.500H121.800ZM111.800 1008V1020.500L120.800 1014.200Z"/></g>
<rect x="144.700" y="997" width="20" height="5.500" fill="#fad66e"/>
<rect x="148.500" y="1006.500" width="12" height="12" stroke="#333" stroke-width="1.100" stroke-dasharray="2.500 1.500"/>
<g fill="#1c8ee0"><rect x="147" y="1005" width="3" height="3"/><rect x="159" y="1005" width="3" height="3"/><rect x="147" y="1017" width="3" height="3"/></g>
<path d="M155 1019L156 1015.500L161 1010.500L163.500 1013L158.500 1018Z" fill="#f0a030"/><circle cx="162.200" cy="1011.200" r="1.600" fill="#e84040"/><path d="M155 1019L155.800 1016.500L157.500 1018.200Z" fill="#444"/>
<path d="M149 1022.500H157V1019" stroke="#ccc" stroke-width="1.500"/>
<path d="M161 999H172.800L168 1005.800H166Z" fill="#444"/><path d="M167 1004V1030.300" stroke="#444" stroke-width="2.200"/>
<g transform="translate(1180 1014.200)"><path d="M-1.500-7.800h3l.5 2.200 1.600.700 1.900-1.200 2.100 2.100-1.200 1.900.700 1.600 2.200.5v3l-2.200.5-.700 1.600 1.200 1.900-2.100 2.100-1.900-1.200-1.600.700-.5 2.200h-3l-.5-2.200-1.600-.700-1.900 1.200-2.100-2.100 1.200-1.900-.700-1.600-2.200-.5v-3l2.200-.5.700-1.600-1.200-1.900 2.100-2.100 1.900 1.200 1.600-.700z" fill="#8c8c8c"/><circle r="2.700" fill="#f0f0f0"/></g>
</svg>
<!--CONTENT-->
<div id="frame"></div>
</body></html>
